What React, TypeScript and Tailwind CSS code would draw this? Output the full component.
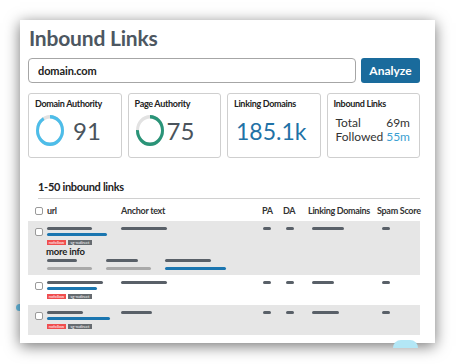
import React from "react";

const font = "font-['Lato','Open_Sans',sans-serif]";

function Ring({ pct, color }: { pct: number; color: string }) {
  const r = 15;
  const c = 2 * Math.PI * r;
  return (
    <svg width="30" height="33" viewBox="0 0 36 36" preserveAspectRatio="none" className="shrink-0">
      <circle cx="18" cy="18" r={r} fill="none" stroke="#e2e2e2" strokeWidth="3.6" />
      <circle
        cx="18"
        cy="18"
        r={r}
        fill="none"
        stroke={color}
        strokeWidth="3.6"
        strokeDasharray={`${c * pct} ${c}`}
        transform="rotate(-90 18 18)"
      />
    </svg>
  );
}

function Check() {
  return <div className="w-[8px] h-[8px] rounded-[2px] border border-[#9a9a9a] bg-white" />;
}

function Bar({ cls }: { cls: string }) {
  return <div className={`h-[3px] rounded-full ${cls}`} />;
}

function Dash() {
  return <div className="h-[3px] w-[8px] rounded-full bg-[#596068]" />;
}

function Badges() {
  return (
    <div className="flex gap-[2px] mt-[4px]">
      <span className="h-[5px] w-[19px] bg-[#f04e4e] text-white text-[4px] leading-[5px] text-center overflow-hidden">nofollow</span>
      <span className="h-[5px] w-[24px] bg-[#666b70] text-white text-[4px] leading-[5px] text-center overflow-hidden">sg-redirect</span>
    </div>
  );
}

type Row = {
  url: string;
  blue: string;
  anchor: string;
  ld: string;
  bg: string;
};

const rows: Row[] = [
  { url: "w-[45px]", blue: "w-[60px]", anchor: "w-[46px]", ld: "w-[32px]", bg: "bg-[#e6e6e6]" },
  { url: "w-[56px]", blue: "w-[50px]", anchor: "w-[46px]", ld: "w-[22px]", bg: "bg-white" },
  { url: "w-[36px]", blue: "w-[63px]", anchor: "w-[31px]", ld: "w-[27px]", bg: "bg-[#e6e6e6]" },
];

const cols = "grid grid-cols-[12px_74px_141px_21px_25px_69px_1fr]";

function LinkRow({ row, more }: { row: Row; more?: boolean }) {
  return (
    <div className={`${row.bg} pl-[7px] pt-[6px] ${more ? "pb-[5px]" : "pb-[6px]"}`}>
      <div className={cols}>
        <div className="pt-[1px]">
          <Check />
        </div>
        <div className="flex flex-col">
          <Bar cls={`bg-[#596068] ${row.url}`} />
          <div className="mt-[3px]">
            <Bar cls={`bg-[#1b76b0] ${row.blue}`} />
          </div>
          <Badges />
        </div>
        <div>
          <Bar cls={`bg-[#596068] ${row.anchor}`} />
        </div>
        <div className="pl-[1px]">
          <Dash />
        </div>
        <div className="pl-[3px]">
          <Dash />
        </div>
        <div className="pl-[4px]">
          <Bar cls={`bg-[#596068] ${row.ld}`} />
        </div>
        <div className="pl-[5px]">
          <Dash />
        </div>
      </div>
      {more && (
        <div className="pl-[11px] mt-[1px]">
          <div className="text-[9.5px] leading-[12px] font-bold tracking-[-0.2px] text-[#222]">more info</div>
          <div className="flex mt-[1px] pl-[1px]">
            <div className="w-[59px] flex flex-col gap-[5px]">
              <Bar cls="bg-[#596068] w-[30px]" />
              <Bar cls="bg-[#a9a9a9] w-[45px]" />
            </div>
            <div className="w-[59px] flex flex-col gap-[5px]">
              <Bar cls="bg-[#596068] w-[32px]" />
              <Bar cls="bg-[#a9a9a9] w-[45px]" />
            </div>
            <div className="w-[61px] flex flex-col gap-[5px]">
              <Bar cls="bg-[#596068] w-[46px]" />
              <Bar cls="bg-[#1b76b0] w-[61px]" />
            </div>
          </div>
        </div>
      )}
    </div>
  );
}

const label = "text-[9px] leading-[12px] font-bold tracking-[-0.3px] text-[#222] whitespace-nowrap";

export default function App() {
  return (
    <div className={`relative w-[456px] h-[364px] bg-white overflow-hidden ${font}`}>
      {/* decorative blobs around the card */}
      <div className="absolute left-[16px] top-[304px] w-[7px] h-[7px] rounded-full bg-[#6cc6ee]" />
      <div className="absolute left-[20px] top-[20px] w-[415px] h-[323px] bg-white shadow-[0_3px_14px_rgba(0,0,0,0.55)] pl-[8px] pr-[15px] pt-[7px]">
        <h1 className="text-[21px] leading-[21px] font-bold tracking-[-0.2px] text-[#4d5761] pl-[1px]">Inbound Links</h1>

        <div className="flex gap-[5px] mt-[10px]">
          <input
            readOnly
            defaultValue="domain.com"
            className="flex-1 h-[25px] rounded-[4px] border border-[#a6a6a6] px-[9px] text-[11px] font-bold tracking-[-0.1px] text-[#222] outline-none"
          />
          <button className="w-[59px] h-[25px] rounded-[3px] bg-[#1a6b9c] text-white text-[12px] font-bold">Analyze</button>
        </div>

        <div className="grid grid-cols-4 gap-[6px] mt-[10px]">
          <div className="h-[65px] rounded-[3px] border border-[#cfcfcf] pl-[6px] pt-[4px]">
            <div className={label}>Domain Authority</div>
            <div className="flex items-center gap-[8px] mt-[4px]">
              <Ring pct={0.91} color="#4dbde9" />
              <span className="text-[24px] leading-[24px] text-[#4a535c]">91</span>
            </div>
          </div>
          <div className="h-[65px] rounded-[3px] border border-[#cfcfcf] pl-[6px] pt-[4px]">
            <div className={label}>Page Authority</div>
            <div className="flex items-center gap-[2px] mt-[4px]">
              <Ring pct={0.75} color="#2a9478" />
              <span className="text-[24px] leading-[24px] text-[#4a535c]">75</span>
            </div>
          </div>
          <div className="h-[65px] rounded-[3px] border border-[#cfcfcf] pl-[6px] pt-[4px]">
            <div className={label}>Linking Domains</div>
            <div className="text-[23px] leading-[24px] text-[#1f72a6] mt-[9px] pl-[2px]">185.1k</div>
          </div>
          <div className="h-[65px] rounded-[3px] border border-[#cfcfcf] pl-[6px] pr-[9px] pt-[4px]">
            <div className={label}>Inbound Links</div>
            <div className="mt-[6px] text-[12px] leading-[14px] text-[#333] pl-[2px]">
              <div className="flex justify-between">
                <span>Total</span>
                <span>69m</span>
              </div>
              <div className="flex justify-between">
                <span>Followed</span>
                <span className="text-[#3a9fd2]">55m</span>
              </div>
            </div>
          </div>
        </div>

        <div className="ml-[10px] mt-[23px] pb-[5px] border-b border-[#d0d0d0] text-[11px] leading-[12px] font-bold tracking-[-0.3px] text-[#222]">
          1-50 inbound links
        </div>

        <div className={`${cols} pl-[7px] h-[22px] pt-[1px] items-center text-[9px] font-bold tracking-[-0.3px] text-[#333] whitespace-nowrap`}>
          <Check />
          <span>url</span>
          <span>Anchor text</span>
          <span>PA</span>
          <span>DA</span>
          <span>Linking Domains</span>
          <span>Spam Score</span>
        </div>

        <LinkRow row={rows[0]} more />
        <LinkRow row={rows[1]} />
        <LinkRow row={rows[2]} />
      </div>
      <div className="absolute left-[393px] top-[340px] w-[25px] h-[8px] rounded-t-full bg-[#b3e7f6]" />
    </div>
  );
}
